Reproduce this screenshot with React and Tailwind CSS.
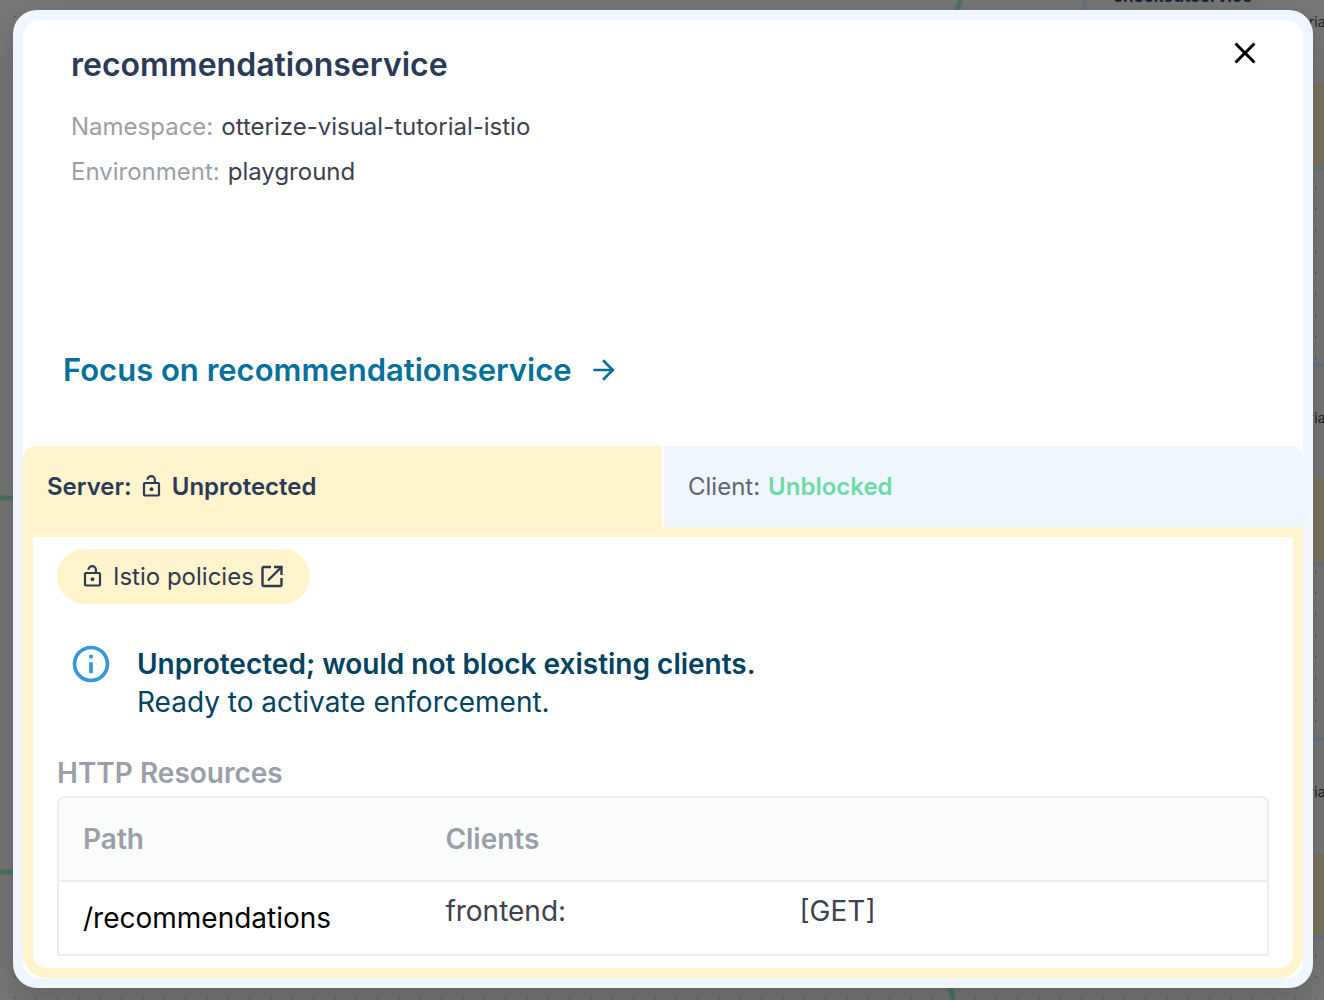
import { MdArrowForward, MdClose, MdInfoOutline } from "react-icons/md";

function UnlockIcon() {
  return (
    <svg viewBox="0 0 24 24" className="size-6 shrink-0" fill="none" stroke="currentColor" strokeWidth="2.2" aria-hidden="true">
      <rect x="4" y="8" width="15" height="12.500" rx="1" />
      <path d="M7.500 4.800A3.700 3.700 0 0 1 14.900 4.800V8" />
      <circle cx="11.500" cy="14.200" r="1.900" fill="currentColor" stroke="none" />
    </svg>
  );
}

function ExternalIcon() {
  return (
    <svg viewBox="0 0 24 24" className="size-6 shrink-0" fill="none" stroke="currentColor" strokeWidth="2.4" aria-hidden="true">
      <path d="M11 2H4Q2.500 2 2.500 3.500V19.500Q2.500 21 4 21H20Q21.500 21 21.500 19.500V13" />
      <path d="M14 2H21.500V10" />
      <path d="M21 2.500L8 15.500" />
    </svg>
  );
}

function ServiceNode({ className, name }) {
  return (
    <div className={`absolute left-[1083px] flex h-[203px] w-[460px] flex-col border-4 border-[#6b7382] bg-[#787878] ${className}`}>
      <div className="flex-1 px-[26px] pt-[15px]">
        <p className="text-[17px] font-bold leading-5 text-[#1c2638]">{name}</p>
        <p className="mt-1 w-[216px] text-right text-sm leading-6 text-[#202329]">otterize-visual-tutorial</p>
      </div>
      <div className="h-[83px] bg-[#7c7560]" />
    </div>
  );
}

function Canvas() {
  return (
    <div className="absolute inset-0 overflow-hidden bg-[#787878]" aria-hidden="true">
      <svg className="absolute inset-0 size-full">
        <defs>
          <pattern id="dots" x="13" y="16" width="21.333" height="21.333" patternUnits="userSpaceOnUse">
            <rect x="1" width="1.300" height="1.300" fill="#444" />
          </pattern>
        </defs>
        <rect width="100%" height="100%" fill="url(#dots)" />
        <g stroke="#4f7562" strokeWidth="5" fill="none">
          <path d="M0 498H30M0 872H30M962 -4L950 30M946 970L956 1010" />
        </g>
      </svg>
      <ServiceNode className="-top-[33px]" name="checkoutservice" />
      <ServiceNode className="top-[363px]" name="cartservice" />
      <ServiceNode className="top-[737px]" name="adservice" />
    </div>
  );
}

function Detail({ label, value }) {
  return (
    <div className="flex gap-2">
      <dt className="text-[#9b9fa7]">{label}</dt>
      <dd className="text-[#3c424e]">{value}</dd>
    </div>
  );
}

export default function App() {
  return (
    <div className="relative flex min-h-screen pt-2.5 pr-[11px] pb-3 pl-[13px] font-['Inter',sans-serif]">
      <Canvas />
      <main
        role="dialog"
        aria-labelledby="service-name"
        className="relative flex flex-1 flex-col rounded-3xl bg-[#f0f6ff] p-2.5 shadow-[0_12px_40px_rgba(0,0,0,0.2)]"
      >
        <div className="flex flex-1 flex-col rounded-2xl bg-white">
          <header className="flex justify-between pt-[25px] pr-10 pl-12">
            <div>
              <h1 id="service-name" className="text-[32px] font-semibold leading-10 text-[#2a3a57]">recommendationservice</h1>
              <dl className="mt-6 flex flex-col gap-[9px] text-2xl leading-9">
                <Detail label="Namespace:" value="otterize-visual-tutorial-istio" />
                <Detail label="Environment:" value="playground" />
              </dl>
            </div>
            <button type="button" aria-label="Close" className="-mt-2.5 size-9 text-black">
              <MdClose className="size-9" />
            </button>
          </header>

          <a href="#focus" className="mt-40 ml-10 flex items-center gap-4 self-start text-[31px] font-semibold leading-10 text-[#04719b]">
            Focus on recommendationservice
            <MdArrowForward className="size-8" />
          </a>

          <div role="tablist" className="mt-14 grid grid-cols-2 gap-0.5 text-2xl leading-8">
            <button type="button" role="tab" aria-selected="true" className="flex h-[81px] items-center gap-2 rounded-tl-xl bg-[#fff4cc] px-6 font-semibold text-[#2a3a57]">
              Server:
              <UnlockIcon />
              Unprotected
            </button>
            <button type="button" role="tab" aria-selected="false" className="flex h-[81px] items-center gap-2 rounded-tr-xl bg-[#f0f6ff] px-6 text-[#62656f]">
              Client:
              <span className="font-semibold text-[#6bdca3]">Unblocked</span>
            </button>
          </div>

          <section role="tabpanel" className="flex-1 rounded-b-3xl border-10 border-[#fff4cc] px-6 py-3">
            <a href="#policies" className="flex h-[55px] w-fit items-center rounded-full bg-[#fff4cc] pr-[26px] pl-6 text-2xl leading-8 text-[#2f3a50]">
              <UnlockIcon />
              <span className="mr-1.5 ml-2">Istio policies</span>
              <ExternalIcon />
            </a>

            <div role="status" className="mt-[38px] flex gap-6 pl-3 text-[28px] leading-[38px] text-[#014361]">
              <MdInfoOutline className="size-11 text-[#3498db]" />
              <div className="pt-[3px]">
                <p className="font-semibold">Unprotected; would not block existing clients.</p>
                <p>Ready to activate enforcement.</p>
              </div>
            </div>

            <h2 className="mt-[33px] text-[28px] font-semibold leading-[38px] text-[#9b9fa7]">HTTP Resources</h2>
            <div className="mt-1 overflow-hidden rounded-t-lg border-2 border-[#eceeee]">
              <table className="w-full table-fixed text-left text-[28px] leading-[38px]">
                <thead className="border-b-2 border-[#eceeee] bg-[#fafcfb] text-[#9b9fa7]">
                  <tr className="h-[83px]">
                    <th scope="col" className="w-[30%] px-6 font-semibold">Path</th>
                    <th scope="col" className="w-[354px] px-6 font-semibold">Clients</th>
                    <th />
                  </tr>
                </thead>
                <tbody>
                  <tr className="h-[73px] text-[#3c424e]">
                    <td className="px-6 text-black">/recommendations</td>
                    <td className="px-6 pt-2.5 align-top">frontend:</td>
                    <td className="px-6 pt-2.5 align-top">[GET]</td>
                  </tr>
                </tbody>
              </table>
            </div>
          </section>
        </div>
      </main>
    </div>
  );
}
